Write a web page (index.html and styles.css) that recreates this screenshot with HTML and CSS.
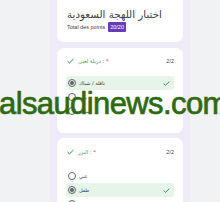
FILE: index.html
```html
<!DOCTYPE html>
<html lang="ar">
<head>
<meta charset="utf-8">
<link rel="stylesheet" href="styles.css">
</head>
<body>
<div class="column">
  <section class="card card-head">
    <h1 class="title">اختبار اللهجة السعودية</h1>
    <div class="meta">
      <span class="meta-label">Total des points</span>
      <span class="badge">20/20</span>
    </div>
  </section>

  <section class="card q1">
    <div class="q-head">
      <svg class="check" viewBox="0 0 8 6" width="7" height="6"><path d="M0.6 3.1 L2.8 5.2 L7.4 0.7" fill="none" stroke="#1e8e3e" stroke-width="1.1"/></svg>
      <span class="q-title"><bdi>دريلة لعبي</bdi> : <span class="req">*</span></span>
      <span class="score">2/2</span>
    </div>
    <div class="opts">
      <div class="opt correct"><span class="radio on"></span><span class="opt-text">ناقلة / شياك</span><svg class="ocheck" viewBox="0 0 8 6" width="7" height="5"><path d="M0.6 3.1 L2.8 5.2 L7.4 0.7" fill="none" stroke="#1e8e3e" stroke-width="1.1"/></svg></div>
      <div class="opt"><span class="radio"></span><span class="opt-text">بيت</span></div>
      <div class="opt"><span class="radio"></span><span class="opt-text">سيارة</span></div>
    </div>
  </section>

  <section class="card q2">
    <div class="q-head">
      <svg class="check" viewBox="0 0 8 6" width="7" height="6"><path d="M0.6 3.1 L2.8 5.2 L7.4 0.7" fill="none" stroke="#1e8e3e" stroke-width="1.1"/></svg>
      <span class="q-title"><bdi>البزر</bdi> : <span class="req">*</span></span>
      <span class="score">2/2</span>
    </div>
    <div class="opts">
      <div class="opt"><span class="radio"></span><span class="opt-text">غني</span></div>
      <div class="opt correct"><span class="radio on"></span><span class="opt-text">طفل</span><svg class="ocheck" viewBox="0 0 8 6" width="7" height="5"><path d="M0.6 3.1 L2.8 5.2 L7.4 0.7" fill="none" stroke="#1e8e3e" stroke-width="1.1"/></svg></div>
      <div class="opt"><span class="radio"></span><span class="opt-text">شاب</span></div>
    </div>
  </section>
</div>
<div class="watermark">alsaudinews.com</div>
</body>
</html>
```

FILE: styles.css
```css
html, body {
  margin: 0;
  padding: 0;
}
body {
  background: #f1f2f4;
  font-family: "DejaVu Sans", "Liberation Sans", sans-serif;
  height: 202px;
  overflow: hidden;
  position: relative;
}
.column {
  margin-left: 50px;
  width: 126px;
  padding: 0 7px;
  background: #efeaf8;
  height: 202px;
}
.card {
  background: #ffffff;
  border-radius: 7px;
  box-sizing: border-box;
}
.card-head {
  height: 42px;
  border-radius: 0 0 7px 7px;
  padding: 6px 10px 0 10px;
}
.title {
  margin: 0;
  font-weight: normal;
  font-size: 10.3px;
  line-height: 16px;
  color: #3c4043;
  direction: ltr;
  text-align: left;
  white-space: nowrap;
}
.meta {
  display: flex;
  align-items: center;
  gap: 3px;
  margin-top: 0;
}
.meta-label {
  font-family: "Liberation Sans", sans-serif;
  font-size: 5.5px;
  color: #3c4043;
}
.badge {
  background: #673ab7;
  color: #ffffff;
  font-family: "Liberation Sans", sans-serif;
  font-size: 5.5px;
  line-height: 10px;
  height: 10px;
  padding: 0 2px;
  border-radius: 1px;
}
.q1 {
  margin-top: 6px;
  height: 85px;
  padding: 6px 9px 0 9px;
}
.q2 {
  margin-top: 5px;
  height: 80px;
  padding: 7px 9px 0 9px;
}
.q-head {
  display: flex;
  align-items: center;
  height: 13px;
  padding-left: 1px;
}
.check {
  display: block;
}
.q-title {
  margin-left: 4px;
  font-size: 5.3px;
  color: #34a853;
  white-space: nowrap;
}
.req {
  color: #d93025;
}
.score {
  margin-left: auto;
  font-family: "Liberation Sans", sans-serif;
  font-size: 5.5px;
  color: #3c4043;
}
.opts {
  display: flex;
  flex-direction: column;
}
.q1 .opts {
  margin-top: 9px;
}
.q2 .opts {
  margin-top: 11px;
}
.opt {
  display: flex;
  align-items: center;
  height: 14px;
  padding: 0 4px 0 2px;
  border-radius: 3px;
}
.opt.correct {
  background: #e6f4ea;
}
.radio {
  width: 8px;
  height: 8px;
  box-sizing: border-box;
  border: 1px solid #5f6368;
  border-radius: 50%;
  display: flex;
  align-items: center;
  justify-content: center;
}
.radio.on::after {
  content: "";
  width: 4px;
  height: 4px;
  border-radius: 50%;
  background: #5f6368;
}
.opt-text {
  margin-left: 3px;
  font-size: 5px;
  color: #3c4043;
  white-space: nowrap;
}
.ocheck {
  margin-left: auto;
  display: block;
}
.watermark {
  position: absolute;
  left: -1px;
  top: 85px;
  font-family: "Liberation Sans", sans-serif;
  font-size: 31px;
  line-height: 38px;
  color: #2e6b0e;
  white-space: nowrap;
  letter-spacing: -0.6px;
  -webkit-text-stroke: 0.7px #2e6b0e;
}
```
